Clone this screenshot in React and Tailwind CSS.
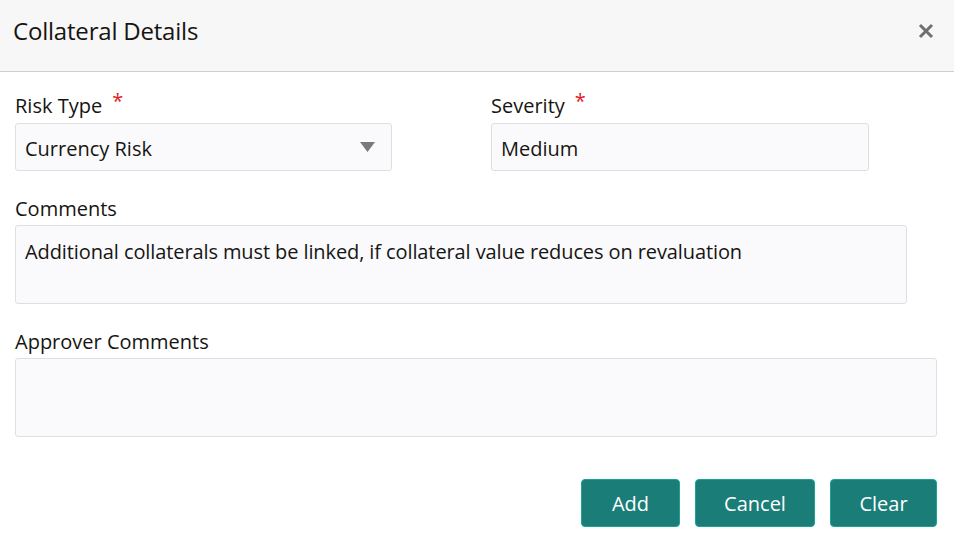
import React from 'react';

const font = { fontFamily: '"Open Sans", "Noto Sans", sans-serif' };

const Label = ({ children, required }) => (
    <div className="h-[28px] text-[20px] leading-[30px] text-[#161513]">
        {children}
        {required && <span className="ml-[10px] align-top text-[20px] leading-[20px] text-[#e5161e]">*</span>}
    </div>
);

const App = () => {
    return (
        <div className="w-[954px] h-[550px] bg-white overflow-hidden" style={font}>
            <div className="h-[72px] bg-[#f7f7f7] border-b border-[#d0d0d0] flex items-center justify-between pl-[13px] pr-[20px]">
                <h1 className="text-[24px] tracking-[-0.2px] text-[#161513] leading-none -mt-[10px]">Collateral Details</h1>
                <button className="-mt-[10px] text-[#707070]">
                    <svg width="16" height="16" viewBox="0 0 16 16">
                        <path d="M2 2 L14 14 M14 2 L2 14" stroke="currentColor" strokeWidth="3" />
                    </svg>
                </button>
            </div>

            <div className="px-[15px] pt-[19px]">
                <div className="flex">
                    <div className="w-[377px]">
                        <Label required>Risk Type</Label>
                        <div className="mt-[4px] h-[48px] bg-[#fafafc] border border-[#dfdfe2] rounded-[3px] flex items-center justify-between pl-[9px] pr-[16px]">
                            <span className="pt-[3px] text-[20px] text-[#161513]">Currency Risk</span>
                            <svg width="15" height="10" viewBox="0 0 15 10">
                                <path d="M0 0 H15 L7.5 10 Z" fill="#7a7a7a" />
                            </svg>
                        </div>
                    </div>
                    <div className="w-[378px] ml-[99px]">
                        <Label required>Severity</Label>
                        <div className="mt-[4px] h-[48px] bg-[#fafafc] border border-[#dfdfe2] rounded-[3px] flex items-center pl-[9px]">
                            <span className="pt-[3px] text-[20px] text-[#161513]">Medium</span>
                        </div>
                    </div>
                </div>

                <div className="mt-[23px] w-[892px]">
                    <Label>Comments</Label>
                    <div className="mt-[3px] h-[79px] bg-[#fafafc] border border-[#dfdfe2] rounded-[3px] pl-[9px] pt-[12px] text-[20px] tracking-[-0.1px] leading-[28px] text-[#161513]">
                        Additional collaterals must be linked, if collateral value reduces on revaluation
                    </div>
                </div>

                <div className="mt-[23px] w-[922px]">
                    <Label>Approver Comments</Label>
                    <div className="mt-[3px] h-[79px] bg-[#fafafc] border border-[#dfdfe2] rounded-[3px]"></div>
                </div>

                <div className="mt-[42px] flex justify-end gap-[15px] pr-[2px]">
                    <button className="w-[99px] h-[48px] pt-[2px] rounded-[4px] bg-[#1b7d77] border border-[#1da096] text-white text-[20px]">Add</button>
                    <button className="w-[120px] h-[48px] pt-[2px] rounded-[4px] bg-[#1b7d77] border border-[#1da096] text-white text-[20px]">Cancel</button>
                    <button className="w-[107px] h-[48px] pt-[2px] rounded-[4px] bg-[#1b7d77] border border-[#1da096] text-white text-[20px]">Clear</button>
                </div>
            </div>
        </div>
    );
};

export default App;
